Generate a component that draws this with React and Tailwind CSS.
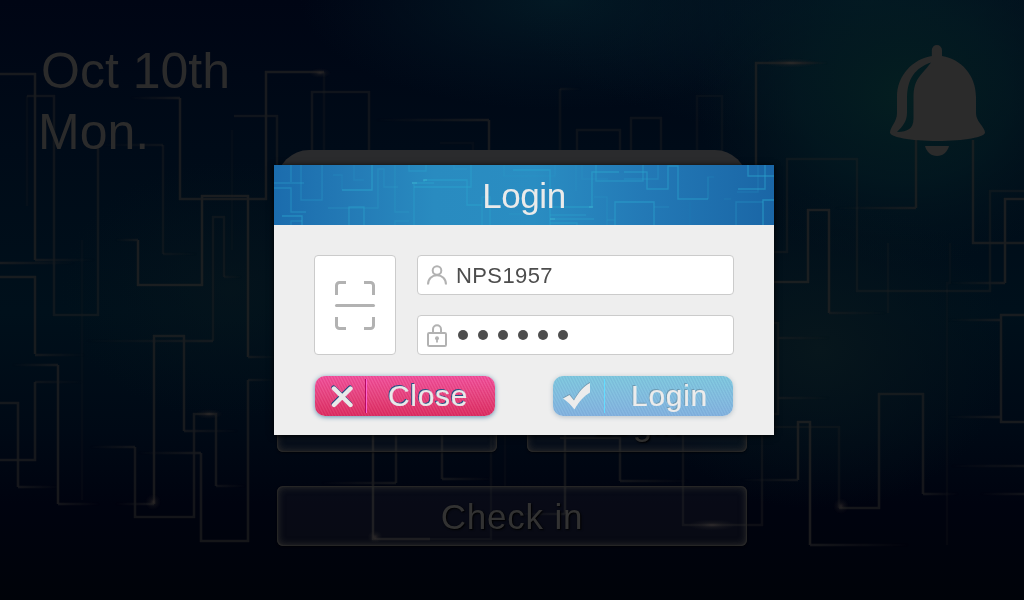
const LINES = [
  ["0,74 35,74 35,260", 0.9],
  ["0,277 35,277 35,354", 0.9],
  ["27,96 54,96 54,315 98,315 98,145", 0.6],
  ["27,96 27,206", 0.25],
  ["163,145 163,254", 0.5],
  ["180,98 180,199 266,199 266,72 324,72", 0.9],
  ["324,72 324,165", 0.3],
  ["138,240 138,285 202,285 202,196 248,196 248,357", 1],
  ["213,341 213,217 224,217 224,277", 0.55],
  ["312,165 312,92 369,92 369,165", 0.6],
  ["234,116 277,116 277,165", 0.6],
  ["232,130 232,250", 0.2],
  ["82,240 82,500", 0.2],
  ["58,365 58,504", 0.9],
  ["0,403 18,403 18,487", 0.8],
  ["0,460 35,460 35,382", 0.8],
  ["154,504 154,336 184,336 184,431", 0.9],
  ["135,447 135,517 194,517 194,414 216,414 216,486", 0.75],
  ["201,453 201,541 248,541 248,380", 0.8],
  ["373,430 373,539 430,539", 0.9],
  ["430,539 491,539 491,430", 0.3],
  ["396,430 396,483", 0.7],
  ["442,430 442,479", 0.7],
  ["505,430 505,486", 0.2],
  ["565,430 565,514", 0.7],
  ["560,438 620,438 620,481", 0.7],
  ["683,430 683,525 762,525 762,430", 0.5],
  ["489,120 489,165", 0.9],
  ["473,165 473,143 440,143", 0.25],
  ["560,165 560,89", 0.4],
  ["577,165 577,130 620,130 620,165", 0.5],
  ["631,165 631,118 661,118 661,165", 0.5],
  ["697,165 697,96 722,96 722,165", 0.3],
  ["756,165 756,63 800,63", 0.9],
  ["774,252 787,252 787,159 857,159 857,291 990,291 990,191 1024,191", 0.5],
  ["774,282 808,282 808,210 829,210 829,313", 1],
  ["888,313 888,243", 0.3],
  ["916,208 916,140", 0.9],
  ["973,140 973,243 1024,243", 0.9],
  ["1005,283 1005,199 1024,199", 1],
  ["950,243 950,283 947,283 947,545", 0.25],
  ["774,323 778,323 778,414 774,414", 0.6],
  ["1024,315 1001,315 1001,422 1024,422", 0.9],
  ["798,480 798,422 810,422 810,545", 1],
  ["774,427 839,427 839,508", 0.4],
  ["839,508 879,508 879,394 923,394 923,494", 0.8],
];

// x, y, width, direction in which the trace fades, opacity
const TAILS = [
  [35, 260, 60, "r", 0.8], [0, 263, 75, "r", 1], [35, 355, 50, "r", 0.8],
  [100, 145, 63, "l", 0.6], [163, 254, 34, "r", 0.5], [130, 98, 50, "l", 0.9],
  [248, 357, 30, "r", 0.8], [115, 240, 23, "l", 0.8], [85, 341, 128, "l", 0.9],
  [224, 277, 18, "r", 0.5], [12, 365, 46, "l", 0.9], [58, 504, 42, "r", 0.8],
  [18, 487, 42, "r", 0.8], [35, 382, 48, "r", 0.6], [184, 431, 54, "r", 0.8],
  [115, 504, 39, "l", 0.8], [90, 447, 45, "l", 0.8], [216, 486, 30, "r", 0.6],
  [138, 453, 63, "l", 0.9], [248, 380, 28, "r", 0.7], [320, 483, 76, "l", 0.8],
  [442, 479, 52, "r", 0.8], [510, 514, 55, "l", 0.7], [620, 481, 70, "r", 0.8],
  [375, 120, 114, "l", 1], [560, 89, 22, "r", 0.5], [800, 63, 28, "r", 1],
  [829, 313, 58, "r", 0.7], [835, 208, 81, "l", 1], [950, 283, 55, "l", 1],
  [778, 338, 52, "r", 0.7], [778, 398, 52, "r", 0.7], [947, 320, 54, "l", 0.9],
  [947, 417, 54, "l", 0.9], [740, 480, 58, "l", 0.8], [810, 545, 100, "r", 0.9],
  [923, 494, 36, "r", 0.8], [980, 494, 44, "l", 0.7], [950, 466, 74, "l", 0.7],
];

const GLOWS = [
  [320, 73, 11, 5], [791, 63, 28, 5], [209, 414, 14, 5], [153, 502, 8, 8],
  [841, 506, 8, 8], [712, 525, 26, 6], [375, 537, 8, 7],
];

function CircuitBackdrop() {
  return (
    <svg className="absolute inset-0" width="1024" height="600" viewBox="0 0 1024 600" aria-hidden="true">
      <defs>
        <linearGradient id="base" x1="0" y1="0" x2="0" y2="1">
          <stop offset="0" stopColor="#000514" />
          <stop offset="0.25" stopColor="#000b18" />
          <stop offset="0.52" stopColor="#00101b" />
          <stop offset="0.72" stopColor="#000915" />
          <stop offset="0.84" stopColor="#00030f" />
          <stop offset="1" stopColor="#000309" />
        </linearGradient>
        <radialGradient id="teal">
          <stop offset="0" stopColor="#041e20" />
          <stop offset="0.5" stopColor="#031a21" stopOpacity="0.75" />
          <stop offset="1" stopColor="#03161f" stopOpacity="0" />
        </radialGradient>
        <radialGradient id="haze">
          <stop offset="0" stopColor="#031924" />
          <stop offset="1" stopColor="#031724" stopOpacity="0" />
        </radialGradient>
        <radialGradient id="moss">
          <stop offset="0" stopColor="#07161c" />
          <stop offset="1" stopColor="#04141c" stopOpacity="0" />
        </radialGradient>
        <radialGradient id="glow">
          <stop offset="0" stopColor="#3a3330" stopOpacity="0.6" />
          <stop offset="0.4" stopColor="#282526" stopOpacity="0.3" />
          <stop offset="1" stopColor="#1c1c22" stopOpacity="0" />
        </radialGradient>
        <linearGradient id="fadeR">
          <stop offset="0" stopColor="#1f2022" />
          <stop offset="1" stopColor="#1f2022" stopOpacity="0" />
        </linearGradient>
        <linearGradient id="fadeL">
          <stop offset="0" stopColor="#1f2022" stopOpacity="0" />
          <stop offset="1" stopColor="#1f2022" />
        </linearGradient>
        <filter id="soft" x="0" y="0" width="1024" height="600" filterUnits="userSpaceOnUse" colorInterpolationFilters="sRGB">
          <feGaussianBlur stdDeviation="0.7" />
        </filter>
      </defs>
      <rect width="1024" height="600" fill="url(#base)" />
      <ellipse cx="560" cy="0" rx="260" ry="110" fill="url(#haze)" />
      <ellipse cx="870" cy="0" rx="360" ry="140" fill="url(#haze)" />
      <ellipse cx="905" cy="95" rx="210" ry="170" fill="url(#teal)" />
      <ellipse cx="820" cy="350" rx="190" ry="160" fill="url(#moss)" />
      <ellipse cx="230" cy="290" rx="170" ry="130" fill="url(#moss)" opacity="0.6" />
      <g filter="url(#soft)" opacity="0.78">
        {LINES.map(([points, opacity]) => (
          <polyline key={points} points={points} fill="none" stroke="#232323" strokeWidth="2.6" opacity={opacity} />
        ))}
        {TAILS.map(([x, y, w, dir, opacity]) => (
          <rect key={`${x}-${y}`} x={x} y={y - 1.3} width={w} height="2.6" fill={dir === "r" ? "url(#fadeR)" : "url(#fadeL)"} opacity={opacity} />
        ))}
      </g>
      {GLOWS.map(([x, y, rx, ry]) => (
        <ellipse key={`${x}-${y}`} cx={x} cy={y} rx={rx} ry={ry} fill="url(#glow)" />
      ))}
    </svg>
  );
}

const HEADER_LINES = [
  ["17,0 17,17", 0.6], ["0,18 30,18", 0.6], ["0,23 17,23 17,47 32,47", 0.6],
  ["8,51 28,51 28,60", 0.8], ["17,60 17,56 28,56", 0.5], ["27,0 27,35 48,35 48,0", 0.45],
  ["59,10 68,10 68,25", 0.25], ["68,25 98,25 98,0", 0.9], ["80,0 80,15 90,15", 0.3],
  ["54,43 104,43 104,4 110,4 110,22 124,22", 0.4], ["121,0 121,47 135,47", 0.4],
  ["121,60 121,56 135,56", 0.4], ["75,60 75,42 90,42 90,60", 0.7], ["140,60 140,19", 0.6],
  ["138,18 160,18", 0.8], ["140,22 197,22 197,0", 0.8], ["135,0 135,6 152,6 152,0", 0.6],
  ["150,17 150,15 193,15 193,40 208,40", 0.8], ["208,60 208,32 216,32 216,60", 0.6],
  ["180,0 180,4 193,4", 0.4], ["230,0 230,11 281,11 281,0", 0.3],
  ["239,5 276,5 276,60", 0.8], ["276,42 318,42 318,7 345,7", 0.85],
  ["322,0 322,16 369,16 369,0", 0.7], ["302,0 302,26", 0.2], ["308,0 308,14 334,14", 0.2],
  ["350,7 373,7 373,24 394,24 394,1 404,1 404,34 434,34", 0.75], ["434,34 434,12", 0.25],
  ["350,14 384,14 384,0", 0.45], ["341,60 341,37 380,37 380,60", 0.8], ["380,42 395,42", 0.4],
  ["276,50 312,50", 0.6], ["276,54 320,54", 0.6], ["276,58 303,58 303,60", 0.7],
  ["333,60 333,32 320,32", 0.3], ["333,55 341,55", 0.4], ["474,0 474,11 500,11", 0.8],
  ["491,0 491,24 464,24", 0.8], ["484,0 484,27 463,27", 0.3],
  ["500,35 489,35 489,60", 0.9], ["462,60 462,37 489,37", 0.45], ["416,60 416,37", 0.15],
  ["434,34 434,12 440,12", 0.2], ["457,34 450,34", 0.2], ["250,49 235,49", 0.4],
];

function DialogHeader() {
  return (
    <header className="relative flex h-[60px] items-center justify-center overflow-hidden bg-[linear-gradient(90deg,#1b6cad_0%,#2379b5_14%,#298bc0_32%,#2a8dc2_52%,#2379b6_74%,#1a66a6_100%)]">
      <svg className="absolute inset-0" width="500" height="60" viewBox="0 0 500 60" fill="none" stroke="#2ba4cd" strokeWidth="1.4" aria-hidden="true">
        {HEADER_LINES.map(([points, opacity]) => (
          <polyline key={points} points={points} opacity={opacity * 0.68} />
        ))}
        <path d="M138 18h5M150 16v-1h3M315 42h4M276 54h5" stroke="#45c4d8" strokeWidth="1.6" opacity="0.4" />
      </svg>
      <h1 className="relative pt-px text-[35px] leading-none tracking-[-0.4px] text-[#eaeaea]">Login</h1>
    </header>
  );
}

function BellIcon() {
  return (
    <svg className="mt-[44px] mr-[38px]" width="97" height="113" viewBox="889 44 97 113" fill="#2b2b2b" aria-hidden="true">
      <path
        fillRule="evenodd"
        d="M931.8 56V50a5.1 5.1 0 0 1 10.2 0V56C961 59 976 75 976 97V113C976 122 985 127 985 132.5C985 137 965 141 937.500 141C910 141 890 137 890 132.500C890 127 897 122 897 113V97C897 75 913 59 931.800 56ZM931 62.500C915 68 907 79 907 98V113C907 121 903 126 897 132C908 131.500 913 129 913.500 119V98C913.500 79 920 77 931 62.500Z"
      />
      <path d="M925 146H949C947.500 152 943 156 937 156C931 156 926.500 152 925 146Z" />
    </svg>
  );
}

function GlassButton({ className, children }) {
  return (
    <div
      className={`flex h-[60px] items-center justify-center rounded-[6px] bg-[#ffffff08] text-[35px] leading-none tracking-[0.8px] text-[#323232] shadow-[inset_0_0_7px_1px_#2c2c2c,inset_0_0_1px_1px_#242424,0_1px_2px_#0008] [text-shadow:1px_1px_2px_#000] ${className}`}
    >
      {children}
    </div>
  );
}

function ScanIcon() {
  return (
    <svg width="42" height="50" viewBox="0 0 42 50" fill="none" stroke="#b2b2b2" strokeWidth="3" aria-hidden="true">
      <path d="M2.500 15V5.500a3 3 0 0 1 3-3H12M30 2.500h6.500a3 3 0 0 1 3 3V15M2.500 37v8.500a3 3 0 0 0 3 3H12M30 48.500h6.500a3 3 0 0 0 3-3V37" />
      <path d="M2.500 25.500h37" strokeLinecap="round" />
    </svg>
  );
}

function UserIcon() {
  return (
    <svg width="20" height="20" viewBox="0 0 20 20" fill="none" stroke="#b2b2b2" strokeWidth="2" aria-hidden="true">
      <circle cx="10" cy="5.500" r="4.300" />
      <path d="M1 19.500C1 13.700 5 10.200 10 10.200S19 13.700 19 19.500" />
    </svg>
  );
}

function LockIcon() {
  return (
    <svg width="20" height="23" viewBox="0 0 20 23" fill="none" stroke="#b2b2b2" strokeWidth="2" aria-hidden="true">
      <rect x="1" y="9" width="18" height="13" rx="1.200" />
      <path d="M6 9V5.300a4 4 0 0 1 8 0V9" />
      <circle cx="10" cy="14.200" r="2" fill="#b2b2b2" stroke="none" />
      <path d="M10 14v4.500" strokeWidth="1.800" />
    </svg>
  );
}

function Field({ icon, children }) {
  return (
    <div className="flex h-10 items-center rounded-[4px] border border-[#cbcbcb] bg-white pl-[9px]">
      {icon}
      {children}
    </div>
  );
}

export default function App() {
  return (
    <div className="relative h-[600px] w-[1024px] overflow-hidden bg-black font-['Liberation_Sans',Arial,sans-serif]">
      <CircuitBackdrop />

      <main className="relative grid h-full grid-cols-[277px_470px_277px]">
        <div className="pt-[41px] pl-[37px] text-[50px] leading-[61px] whitespace-nowrap text-[#2b2b2b]">
          <p className="pl-[4px]">Oct 10th</p>
          <p className="pl-px">Mon.</p>
        </div>
        <div className="flex flex-col pt-[150px]">
          <div className="mb-[22px] h-[220px] rounded-[32px] bg-[#2a2b2d]" />
          <div className="mb-[34px] flex justify-between">
            <GlassButton className="w-[220px]" />
            <GlassButton className="w-[220px]">Login</GlassButton>
          </div>
          <GlassButton>Check in</GlassButton>
        </div>
        <div className="flex items-start justify-end">
          <BellIcon />
        </div>
      </main>

      <section className="absolute top-[165px] left-[274px] h-[270px] w-[500px] bg-[#eeeeee] shadow-[0_1px_6px_0px_#000]">
        <DialogHeader />
        <div className="px-10 pt-[30px]">
          <div className="flex gap-[21px]">
            <div className="flex h-[100px] w-[82px] items-center justify-center rounded-[4px] border border-[#cbcbcb] bg-white">
              <ScanIcon />
            </div>
            <div className="flex w-[317px] flex-col gap-5">
              <Field icon={<UserIcon />}>
                <span className="pt-px pl-[9px] text-[22px] leading-none tracking-[0.4px] text-[#4d4d4d]">NPS1957</span>
              </Field>
              <Field icon={<LockIcon />}>
                <div className="flex gap-[10px] pl-[11px]">
                  {[0, 1, 2, 3, 4, 5].map((i) => (
                    <span key={i} className="size-[10px] rounded-full bg-[#4d4d4d]" />
                  ))}
                </div>
              </Field>
            </div>
          </div>
          <div className="mt-[21px] flex justify-between pr-px pl-px">
            <button className="flex h-10 w-[180px] items-center rounded-[10px] bg-[repeating-linear-gradient(63.4deg,#ffffff12_0px,#b0004028_1.34px,#ffffff12_2.68px),linear-gradient(180deg,#f3529f_0%,#e8447f_50%,#dd2c60_100%)] shadow-[0_1px_5px_0px_#5f8fae]">
              <svg className="ml-[15px]" width="24" height="24" viewBox="0 0 24 24" fill="none" strokeWidth="4.400" strokeLinecap="round" aria-hidden="true">
                <path d="M3.500 3.500l16.500 16.500M20 3.500L3.500 20" stroke="#174a80" />
                <path d="M4 4.500l16.500 16.500M20.500 4.500L4 21" stroke="#e9e9e9" />
              </svg>
              <span className="ml-[11px] h-[34px] w-[2px] border-l border-[#b50c62] bg-[#ff62d0]" />
              <span className="ml-[21px] text-[30px] leading-none tracking-[0.7px] text-[#e9e9e9] [-webkit-text-stroke:0.2px_#e9e9e9] [text-shadow:-1px_-1px_0_#245385]">Close</span>
            </button>
            <button className="flex h-10 w-[180px] items-center rounded-[10px] bg-[repeating-linear-gradient(63.4deg,#ffffff10_0px,#6f8fbf38_1.34px,#ffffff10_2.68px),linear-gradient(180deg,#7bcadf_0%,#7fbfe0_50%,#80b2e0_100%)] shadow-[0_1px_5px_0px_#b4c0c8]">
              <svg className="ml-[9px]" width="30" height="28" viewBox="0 0 30 28" aria-hidden="true">
                <path d="M1 15.500L7.500 12L12 17.500C17 8.500 22 3 28 0V9.500C22 13 16.500 19 12.500 26C9 22 5 18 1 15.500Z" fill="#7098ae" />
                <path d="M1 16.500L7.500 13L12 18.500C17 9.500 22 4 28 1V10.500C22 14 16.500 20 12.500 27.500C9 23 5 19 1 16.500Z" fill="#ececec" />
              </svg>
              <span className="ml-[12px] h-[34px] w-px bg-[#62dcff]" />
              <span className="ml-[26px] text-[30px] leading-none tracking-[0.7px] text-[#ececec] [-webkit-text-stroke:0.2px_#ececec] [text-shadow:-1px_-1px_0_#6f9bb2]">Login</span>
            </button>
          </div>
        </div>
      </section>
    </div>
  );
}
